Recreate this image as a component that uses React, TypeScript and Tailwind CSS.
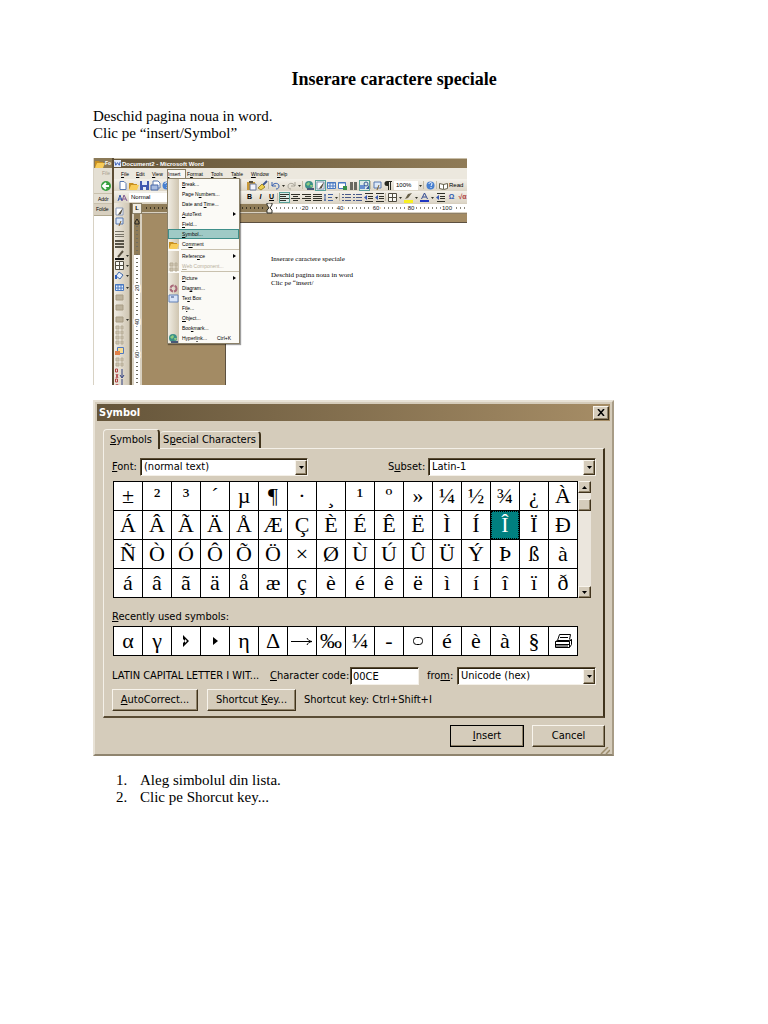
import { useState } from 'react';
import type { ReactNode } from 'react';

const SYMBOLS = [
  ...'±²³´µ¶·¸¹º»¼½¾¿À',
  ...'ÁÂÃÄÅÆÇÈÉÊËÌÍÎÏÐ',
  ...'ÑÒÓÔÕÖ×ØÙÚÛÜÝÞßà',
  ...'áâãäåæçèéêëìíîïð',
];

const Hollow = () => (
  <svg viewBox="0 0 8 12" className="w-2 h-3" aria-hidden="true">
    <path d="M1 0l6 6-6 6V8l2-2-2-2z" fill="#000" />
    <path d="M3 4l2 2-2 2z" fill="#fff" />
  </svg>
);

const Solid = () => (
  <svg viewBox="0 0 5 8" className="w-[5px] h-2" aria-hidden="true">
    <path d="M0 0l5 4-5 4z" fill="#000" />
  </svg>
);

const LongArrow = () => (
  <svg viewBox="0 0 22 9" className="w-[22px] h-[9px]" fill="none" stroke="#000" aria-hidden="true">
    <path d="M0 4.500h20M16 1c1 2 2 3 5 3.500-3 .5-4 1.500-5 3.500" />
  </svg>
);

const Oval = () => (
  <svg viewBox="0 0 12 10" className="w-3 h-[10px]" fill="none" stroke="#000" aria-hidden="true">
    <rect x="1.500" y="1.500" width="9" height="7" rx="3" />
  </svg>
);

const Printer = () => (
  <svg viewBox="0 0 19 16" className="w-[19px] h-4" fill="none" stroke="#000" aria-hidden="true">
    <path d="M3.500 7.500l2-6h11l-1 5M1.500 8.500l2-1h12l2-1v5l-2 3h-14zM1.500 8.500h14v6M1.500 11.500h14M2 13h12M15.500 8.500l2-2M6 4.500h8" />
  </svg>
);

const RECENT: { name: string; glyph: ReactNode }[] = [
  { name: 'alpha', glyph: 'α' },
  { name: 'gamma', glyph: 'γ' },
  { name: 'arrowhead', glyph: <Hollow /> },
  { name: 'small arrowhead', glyph: <Solid /> },
  { name: 'eta', glyph: 'η' },
  { name: 'delta', glyph: 'Δ' },
  { name: 'right arrow', glyph: <LongArrow /> },
  { name: 'per mille', glyph: '‰' },
  { name: 'one quarter', glyph: '¼' },
  { name: 'hyphen', glyph: '-' },
  { name: 'circle', glyph: <Oval /> },
  { name: 'e acute', glyph: 'é' },
  { name: 'e grave', glyph: 'è' },
  { name: 'a grave', glyph: 'à' },
  { name: 'section', glyph: '§' },
  { name: 'printer', glyph: <Printer /> },
];

// toolbar drawings, all on an 11x11 grid
const icons: Record<string, ReactNode> = {
  page: <path d="M3 1.500h4l2 2v6H3z" fill="#fff" stroke="#5878b0" />,
  open: (
    <>
      <path d="M1 3h4l1 1h3v5H1z" fill="#c89020" />
      <path d="M3 5h8L9 10H1z" fill="#f8cc58" />
    </>
  ),
  save: (
    <>
      <path d="M1 1h9v9H1z" fill="#4058b0" />
      <path d="M3 1h5v4H3zM4 7h3v3H4z" fill="#e4eaf8" />
    </>
  ),
  mail: (
    <>
      <path d="M3 1h5l2 2v5H3z" fill="#fff" stroke="#5878b0" />
      <path d="M1 5h7v5H1z" fill="#a8bce0" stroke="#4868a8" />
    </>
  ),
  paste: (
    <>
      <path d="M1 2h8v8H1z" fill="#c89838" />
      <path d="M4 4h6v6H4z" fill="#f4f4fc" stroke="#68789c" />
      <path d="M3 1h4v2H3z" fill="#585040" />
    </>
  ),
  brush: (
    <>
      <path d="M10 1L5 6" stroke="#405890" strokeWidth="2" />
      <path d="M5 4l3 3-4 3-3-2z" fill="#f0d050" stroke="#a08830" />
    </>
  ),
  undo: <path d="M2 2v4h4M2 6c2-4 7-3 7 0 0 2-1 3-3 3" fill="none" stroke="#3860b0" />,
  redo: <path d="M9 2v4H5M9 6C7 2 2 3 2 6c0 2 1 3 3 3" fill="none" stroke="#a8a498" />,
  globe: (
    <>
      <circle cx="5" cy="5" r="4" fill="#3c9088" />
      <path d="M2 4l3-2 1 2-2 2zM6 5h3L7 8z" fill="#90cc80" />
      <path d="M3 9h7" stroke="#485878" strokeWidth="2" />
    </>
  ),
  pencil: (
    <>
      <path d="M2 2h7v7H2z" fill="#fff" stroke="#8898b8" />
      <path d="M9 2L5 7l-1 2 3-1z" fill="#585040" />
    </>
  ),
  table: (
    <>
      <path d="M1.500 2.500h8v6h-8z" fill="#e8f0fc" stroke="#4878c0" />
      <path d="M1 3h9M4 3v6M7 3v6M1 6h9" stroke="#4878c0" />
    </>
  ),
  sheet: (
    <>
      <path d="M1.500 2.500h7v6h-7z" fill="#fff" stroke="#4878c0" />
      <path d="M1 3h8" stroke="#4878c0" />
      <path d="M6 6h4v4H6z" fill="#389048" />
    </>
  ),
  columns: <path d="M2 2h3v8H2zM6 2h3v8H6z" fill="#686860" />,
  draw: (
    <>
      <path d="M1 5h5v4H1z" fill="#6890d0" />
      <circle cx="7" cy="4" r="2" fill="none" stroke="#385898" />
      <path d="M7 9l3-4v4z" fill="#3858a0" />
    </>
  ),
  map: (
    <>
      <path d="M2 2h7v6H2z" fill="#dce8f8" stroke="#5878b0" />
      <path d="M7 5l-2 5" stroke="#806030" />
    </>
  ),
  pilcrow: <path d="M9 1H4a2 2 0 000 5h1v4h1V2h1v8h1V2h1z" fill="#282820" />,
  help: (
    <>
      <circle cx="5.500" cy="5.500" r="4" fill="#4880d0" />
      <path d="M4 4c0-2 3-2 3 0 0 1-1 1-1 2M6 7v1" fill="none" stroke="#fff" />
    </>
  ),
  book: <path d="M1.500 3.500l4 1 4-1v5l-4 1-4-1zM5.500 4v5" fill="#fff" stroke="#686450" />,
  left: <path d="M1 2.500h9M1 4.500h6M1 6.500h9M1 8.500h6" stroke="#303028" />,
  center: <path d="M1 2.500h9M3 4.500h5M1 6.500h9M3 8.500h5" stroke="#303028" />,
  right: <path d="M1 2.500h9M4 4.500h6M1 6.500h9M4 8.500h6" stroke="#303028" />,
  justify: <path d="M1 2.500h9M1 4.500h9M1 6.500h9M1 8.500h9" stroke="#303028" />,
  spacing: <path d="M2 2v7M5 2.500h5M5 5.500h4M5 8.500h5M1 3h2M1 8h2" stroke="#4060a0" />,
  list: <path d="M1 2.500h2M1 5.500h2M1 8.500h2M4 2.500h6M4 5.500h6M4 8.500h6" stroke="#485888" />,
  indent: (
    <>
      <path d="M2 1.500h8M5 4.500h5M5 6.500h5M2 9.500h8" stroke="#303028" />
      <path d="M4 3v5L1 5.500z" fill="#3858b0" />
    </>
  ),
  border: <path d="M1.500 1.500h8v8h-8zM5.500 1.500v8M1.500 5.500h8" fill="#f8f8f4" stroke="#504c40" />,
  highlight: (
    <>
      <path d="M1 8h9v3H1z" fill="#f8f020" />
      <path d="M9 1L5 6l-3 1 3-5z" fill="#686048" />
    </>
  ),
  color: (
    <>
      <path d="M2.500 7L5.500 1l3 6M4 5h3" fill="none" stroke="#304890" />
      <path d="M1 8h9v2H1z" fill="#2038c0" />
    </>
  ),
  lines: <path d="M1 3.500h9M1 6.500h9M1 8.500h9" stroke="#787468" />,
  thick: <path d="M1 3h9M1 6h9M1 9h9" stroke="#585448" strokeWidth="2" />,
  pen: (
    <>
      <path d="M1 8h9v2H1z" fill="#101010" />
      <path d="M9 1L4 7" stroke="#585040" strokeWidth="2" />
    </>
  ),
  bucket: (
    <>
      <path d="M5 2l4 3-3 4-4-3z" fill="#e8f0fc" stroke="#4068a8" />
      <path d="M2 5v4" stroke="#3060c0" strokeWidth="2" />
    </>
  ),
  cells: <path d="M2 3h7v5H2z" fill="#bcb29c" stroke="#a89c84" />,
  dim: <path d="M2 2h3v3H2zM7 2h2v3H7zM2 7h3v3H2zM7 7h2v3H7z" fill="#cbc2ae" stroke="#b8ae98" />,
  frame: (
    <>
      <path d="M3.500 1.500h6v6h-6z" fill="#f8dc90" stroke="#5078c0" />
      <path d="M1 5h5v4H1z" fill="#e08048" />
    </>
  ),
  sortUp: (
    <>
      <path d="M1.500 1v3h2V1zM2 6l2 4M4 6L2 10" fill="none" stroke="#b04040" />
      <path d="M8 1v8M6 7l2 3 2-3" fill="none" stroke="#304080" />
    </>
  ),
  ring: <circle cx="5.500" cy="5.500" r="3" fill="none" stroke="#a86878" strokeWidth="2" strokeDasharray="4 1" />,
  picture: (
    <>
      <path d="M1 2h9v7H1z" fill="#d8e4f8" stroke="#6080b8" />
      <path d="M3 4h3" stroke="#304880" />
    </>
  ),
};

const Icon = ({ name, boxed = false }: { name: string; boxed?: boolean }) => (
  <svg
    viewBox="0 0 11 11"
    aria-hidden="true"
    className={
      boxed
        ? 'w-[11px] h-[11px] shrink-0 bg-[#dcebe6] outline outline-1 -outline-offset-1 outline-[#58a098]'
        : 'w-[11px] h-[11px] shrink-0'
    }
  >
    {icons[name]}
  </svg>
);

const Caret = () => (
  <svg viewBox="0 0 5 11" aria-hidden="true" className="w-[5px] h-[11px] shrink-0">
    <path d="M1 5h3L2.500 7z" fill="#303028" />
  </svg>
);

const Gap = () => <span className="w-[2px] h-2 shrink-0 border-l border-[#c4bca8]" />;

// "-" is a separator, "v" a drop-down caret, "[x]" a pressed button
const Tools = ({ items }: { items: string[] }) => (
  <>
    {items.map((item, i) => {
      if (item === '-') return <Gap key={i} />;
      if (item === 'v') return <Caret key={i} />;
      if (item.startsWith('[')) return <Icon key={i} name={item.slice(1, -1)} boxed />;
      return <Icon key={i} name={item} />;
    })}
  </>
);

const MENU_BAR = [
  { key: 'F', rest: 'ile', width: 'w-[15px]' },
  { key: 'E', rest: 'dit', width: 'w-[16px]' },
  { key: 'V', rest: 'iew', width: 'w-[16px]' },
  { key: 'I', rest: 'nsert', width: 'w-[19px] bg-[#f8f6f2] outline outline-1 -outline-offset-1 outline-[#8a8068]' },
  { pre: 'F', key: 'o', rest: 'rmat', width: 'w-[24px] pl-[3px]' },
  { key: 'T', rest: 'ools', width: 'w-[20px]' },
  { pre: 'T', key: 'a', rest: 'ble', width: 'w-[20px]' },
  { key: 'W', rest: 'indow', width: 'w-[26px]' },
  { key: 'H', rest: 'elp', width: 'w-[16px]' },
];

type MenuItem = {
  text: [string, string, string];
  icon?: string;
  sub?: boolean;
  hint?: string;
  active?: boolean;
  disabled?: boolean;
  line?: boolean;
};

const INSERT_MENU: MenuItem[] = [
  { text: ['', 'B', 'reak...'] },
  { text: ['Page N', 'u', 'mbers...'] },
  { text: ['Date and ', 'T', 'ime...'] },
  { text: ['', 'A', 'utoText'], sub: true },
  { text: ['', 'F', 'ield...'] },
  { text: ['', 'S', 'ymbol...'], active: true },
  { text: ['Co', 'm', 'ment'], icon: 'open' },
  { text: ['Refere', 'n', 'ce'], sub: true, line: true },
  { text: ['', 'W', 'eb Component...'], icon: 'dim', disabled: true },
  { text: ['', 'P', 'icture'], sub: true, line: true },
  { text: ['Dia', 'g', 'ram...'], icon: 'ring' },
  { text: ['Te', 'x', 't Box'], icon: 'picture' },
  { text: ['Fi', 'l', 'e...'] },
  { text: ['', 'O', 'bject...'] },
  { text: ['Boo', 'k', 'mark...'] },
  { text: ['Hyperl', 'i', 'nk...'], icon: 'globe', hint: 'Ctrl+K' },
];

const SIDE_TOOLS: { name: string; caret?: boolean; gap?: boolean }[] = [
  { name: 'pencil' },
  { name: 'map', gap: true },
  { name: 'lines' },
  { name: 'thick', gap: true },
  { name: 'pen', caret: true },
  { name: 'border', caret: true },
  { name: 'bucket', caret: true, gap: true },
  { name: 'table', caret: true },
  { name: 'cells' },
  { name: 'cells', gap: true },
  { name: 'cells', caret: true },
  { name: 'dim' },
  { name: 'dim', gap: true },
  { name: 'frame' },
  { name: 'dim', gap: true },
  { name: 'sortUp' },
  { name: 'sortUp' },
];

const InsertMenu = () => (
  <div
    role="menu"
    className="absolute left-[53px] top-[20px] w-[73px] border border-[#8a8068] bg-[#fbfaf6] shadow-[1px_1px_1px_#00000060]"
  >
    {INSERT_MENU.map((item) => (
      <div key={item.text.join('')} className={item.line ? 'pt-[2px] bg-[linear-gradient(#c9c1ae,#c9c1ae)] bg-size-[58px_1px] bg-right-top bg-no-repeat' : ''}>
        <button
          type="button"
          role="menuitem"
          disabled={item.disabled}
          className={
            item.active
              ? 'flex w-full h-[10px] items-center bg-[#9fcac6] outline outline-1 -outline-offset-1 outline-[#3f8f8a] text-black'
              : item.disabled
                ? 'flex w-full h-[10px] items-center text-[#b8b09c]'
                : 'flex w-full h-[10px] items-center text-black'
          }
        >
          <span
            className={
              item.active
                ? 'flex w-[11px] h-full items-center shrink-0'
                : 'flex w-[11px] h-full items-center shrink-0 bg-linear-to-r from-[#f0ece2] to-[#cfc5b0]'
            }
          >
            {item.icon && <Icon name={item.icon} />}
          </span>
          <span className="pl-[3px] whitespace-nowrap">
            {item.text[0]}
            <u>{item.text[1]}</u>
            {item.text[2]}
          </span>
          {item.sub && (
            <svg viewBox="0 0 3 4" className="ml-auto mr-[3px] w-[3px] h-1" aria-hidden="true">
              <path d="M0 0l3 2-3 2z" />
            </svg>
          )}
          {item.hint && <span className="ml-auto pr-2">{item.hint}</span>}
        </button>
      </div>
    ))}
  </div>
);

const HorizontalRuler = () => (
  <svg viewBox="0 0 326 11" className="w-[326px] h-[11px] shrink-0" aria-hidden="true">
    <path d="M0 1h128v8H0z" fill="#8f7c58" />
    <path d="M127 1h199v8H127z" fill="#fff" />
    <path d="M0 10.500h326" stroke="#8f8068" />
    <path d="M4 5h120" stroke="#3c3424" strokeWidth="2" strokeDasharray="1 3" />
    <path d="M134 5h192" stroke="#8c887c" strokeWidth="2" strokeDasharray="1 3" />
    <path d="M125 0h5v2l-2 3 2 2v3h-5V7l2-2-2-3z" fill="#f4f0e8" stroke="#303028" />
    <g fontSize="6" textAnchor="middle" fill="#202020" className="[paint-order:stroke] stroke-white stroke-3">
      <text x="163" y="7">20</text>
      <text x="198" y="7">40</text>
      <text x="234" y="7">60</text>
      <text x="269" y="7">80</text>
      <text x="305" y="7">100</text>
    </g>
  </svg>
);

const VerticalRuler = () => (
  <svg viewBox="0 0 10 171" className="w-[10px] h-[171px] shrink-0" aria-hidden="true">
    <path d="M0 0h10v171H0z" fill="#d8d0c0" />
    <path d="M2 0h6v41H2z" fill="#8f7c58" />
    <path d="M2 41h6v130H2z" fill="#fff" />
    <path d="M5 12v159" stroke="#706c60" strokeWidth="2" strokeDasharray="1 3" />
    <path d="M3 10V8l2-3 2 3v2z" fill="none" stroke="#202020" />
    <g fontSize="6" textAnchor="middle" fill="#202020" className="[paint-order:stroke] stroke-white stroke-3">
      <text transform="translate(7 74) rotate(-90)">20</text>
      <text transform="translate(7 108) rotate(-90)">40</text>
      <text transform="translate(7 141) rotate(-90)">60</text>
    </g>
  </svg>
);

const ExplorerEdge = () => (
  <div className="w-[18px] shrink-0 whitespace-nowrap text-[5px] leading-[10px]">
    <div className="flex h-[10px] items-center bg-[#8b7a58] font-bold text-white">
      <Icon name="open" />
      Fo
    </div>
    <div className="h-[11px] bg-[#e4dfd3] pl-2 text-[#a8a090]">File</div>
    <div className="flex h-[14px] items-center justify-end bg-[#e4dfd3]">
      <svg viewBox="0 0 12 12" className="w-3 h-3" aria-hidden="true">
        <circle cx="6" cy="6" r="5" fill="#38a040" />
        <path d="M9 6H3M6 3L3 6l3 3" fill="none" stroke="#fff" strokeWidth="2" />
      </svg>
    </div>
    <div className="h-[11px] border-y border-[#c8c0ac] bg-[#e4dfd3] pl-1">Addr</div>
    <div className="h-[12px] border-b border-[#b0a890] bg-[#d8d0c0] pl-[2px]">Folde</div>
  </div>
);

const WordWindow = () => (
  <figure className="flex w-full max-w-[374px] h-[227px] overflow-hidden border-l border-[#d8d2c4] bg-white font-['Liberation_Sans',sans-serif]">
    <ExplorerEdge />
    <div className="relative flex min-w-0 flex-1 flex-col border-l-2 border-[#5c4d34] text-[5px] leading-[10px]">
      <div className="flex h-[10px] items-center border-t border-[#c8bea8] bg-linear-to-r from-[#66563a] to-[#8f7b57] font-bold text-white">
        <svg viewBox="0 0 8 8" className="w-[7px] h-[7px] mr-px" aria-hidden="true">
          <path d="M0 0h8v8H0z" fill="#e4ecfc" />
          <path d="M1 2l1 4 2-3 2 3 1-4" fill="none" stroke="#2850b0" />
        </svg>
        <span className="text-[6px]">Document2 - Microsoft Word</span>
      </div>
      <nav aria-label="Word menu" className="flex h-[11px] shrink-0 items-center bg-[#ece8de] pl-[6px]">
        {MENU_BAR.map((item) => (
          <button type="button" key={item.key + item.rest} className={`${item.width} h-[10px] shrink-0 pl-px text-left`}>
            {item.pre}
            <u>{item.key}</u>
            {item.rest}
          </button>
        ))}
      </nav>
      <div className="flex h-3 shrink-0 items-center bg-linear-to-b from-[#f4f1ea] to-[#dcd5c6] pl-[3px]">
        <div className="flex w-[129px] shrink-0 items-center overflow-hidden">
          <Tools items={['page', 'open', 'save', 'mail', 'help', 'map', 'page', 'book']} />
        </div>
        <Tools
          items={['paste', 'brush', '-', 'undo', 'v', 'redo', 'v', '-', 'globe', '[pencil]', 'table', 'sheet', 'columns', '[draw]', '-', 'map', 'pilcrow']}
        />
        <input aria-label="Zoom" defaultValue="100%" className="w-[24px] h-[9px] shrink-0 bg-white pl-[2px] text-[6px]" />
        <Tools items={['v', '-', 'help', '-', 'book']} />
        <span className="text-[6px]">Read</span>
      </div>
      <div className="flex h-3 shrink-0 items-center bg-linear-to-b from-[#f4f1ea] to-[#dcd5c6] pl-[3px]">
        <div className="flex w-[127px] shrink-0 items-center gap-px">
          <svg viewBox="0 0 11 11" className="w-[11px] h-[11px]" aria-hidden="true">
            <path d="M1 9l2-6 2 6M2 7h3" fill="none" stroke="#3858a8" />
            <path d="M5 9l2-6 3 6M6 7h3" fill="none" stroke="#805890" />
          </svg>
          <input aria-label="Style" defaultValue="Normal" className="w-[60px] h-[9px] bg-white pl-[2px] text-[6px]" />
        </div>
        <b className="w-[11px] shrink-0 text-center text-[7px]">B</b>
        <i className="w-[11px] shrink-0 text-center text-[7px] font-bold">I</i>
        <u className="w-[11px] shrink-0 text-center text-[7px] font-bold">U</u>
        <Tools
          items={['-', '[left]', 'center', 'right', 'justify', 'spacing', 'v', '-', 'list', 'list', 'indent', 'indent', '-', 'border', 'v', 'highlight', 'v', 'color', 'v', 'indent']}
        />
        <b className="w-[11px] shrink-0 text-center text-[7px] text-[#3058b0]">Ω</b>
        <b className="w-[11px] shrink-0 text-center text-[7px] text-[#b04040]">√α</b>
      </div>
      <div className="flex min-h-0 flex-1">
        <div className="flex w-4 shrink-0 flex-col border-r border-[#a49a84] bg-linear-to-r from-[#f0ece3] to-[#d0c7b4] pt-[3px]">
          {SIDE_TOOLS.map((tool, i) => (
            <div key={i} className={tool.gap ? 'mb-[2px] flex h-[10px] shrink-0 items-center' : 'flex h-[10px] shrink-0 items-center'}>
              <Icon name={tool.name} />
              {tool.caret && <Caret />}
            </div>
          ))}
        </div>
        <div className="flex min-w-0 flex-1 flex-col overflow-hidden border-l-2 border-[#6a5b40]">
          <div className="flex h-[11px] shrink-0 bg-[#d8d0c0]">
            <span className="w-[10px] shrink-0 border border-[#8a8068] bg-[#f0ece2] text-center text-[6px] leading-[9px] font-bold">L</span>
            <HorizontalRuler />
          </div>
          <div className="flex min-h-0 flex-1">
            <VerticalRuler />
            <div className="flex-1 bg-[#a38b64] pt-2 pl-[83px]">
              <div className="h-full border-t border-l border-[#5c5040] bg-white pl-[45px] pt-[32px] font-['Liberation_Serif',serif] text-[7px] leading-2 text-black">
                <p className="pb-2">Inserare caractere speciale</p>
                <p>Deschid pagina noua in word</p>
                <p>Clic pe “insert/</p>
              </div>
            </div>
          </div>
        </div>
      </div>
      <InsertMenu />
    </div>
  </figure>
);

const RAISED = 'border border-t-[#f8f4ec] border-l-[#f8f4ec] border-r-[#40331c] border-b-[#40331c] shadow-[inset_-1px_-1px_0_#8f8268]';
const SUNKEN = 'border border-t-[#5a4c34] border-l-[#5a4c34] border-r-[#f4f0e8] border-b-[#f4f0e8] shadow-[inset_1px_1px_0_#2c2210]';

const Arrow = ({ up = false }: { up?: boolean }) => (
  <svg viewBox="0 0 5 3" className="w-[5px] h-[3px]" aria-hidden="true">
    <path d={up ? 'M0 3h5L2.500 0z' : 'M0 0h5L2.500 3z'} />
  </svg>
);

const SelectBox = ({ id, options, className }: { id: string; options: string[]; className: string }) => (
  <div className={`relative h-[18px] ${className}`}>
    <select id={id} className={`h-full w-full appearance-none bg-white pl-[3px] leading-4 ${SUNKEN}`}>
      {options.map((option) => (
        <option key={option}>{option}</option>
      ))}
    </select>
    <span className={`pointer-events-none absolute top-[2px] right-px bottom-px flex w-3 items-center justify-center bg-[#d5ccbb] ${RAISED}`}>
      <Arrow />
    </span>
  </div>
);

const SymbolDialog = () => {
  const [selected, setSelected] = useState('Î');

  return (
    <section
      aria-label="Symbol"
      className="w-full max-w-[521px] border-2 border-t-[#e8e2d6] border-l-[#e8e2d6] border-r-[#a89c86] border-b-[#8f846e] bg-[#d5ccbb] px-[2px] pt-[2px] font-['DejaVu_Sans_Condensed','DejaVu_Sans',sans-serif] text-[11px] leading-4 text-black"
    >
      <header className="flex h-[17px] items-center justify-between bg-linear-to-r from-[#65553a] to-[#a68d66] pl-[2px] pr-px">
        <h2 className="font-bold text-white">Symbol</h2>
        <button type="button" aria-label="Close" className={`flex h-[14px] w-4 items-center justify-center bg-[#d5ccbb] ${RAISED}`}>
          <svg viewBox="0 0 8 7" className="w-2 h-[7px]" stroke="#000" strokeWidth="1.500" aria-hidden="true">
            <path d="M1 0l6 7M7 0L1 7" />
          </svg>
        </button>
      </header>

      <div className="pt-2 pr-[5px] pl-[6px]">
        <div role="tablist" className="flex items-end">
          <button
            type="button"
            role="tab"
            aria-selected="true"
            className="relative -mb-px h-5 w-[57px] rounded-t-sm border-t border-l border-r-2 border-t-[#f4f0e8] border-l-[#f4f0e8] border-r-[#40331c] bg-[#d5ccbb]"
          >
            <u>S</u>ymbols
          </button>
          <button
            type="button"
            role="tab"
            aria-selected="false"
            className="h-[17px] w-[101px] rounded-t-sm border-t border-r-2 border-t-[#f4f0e8] border-r-[#40331c]"
          >
            S<u>p</u>ecial Characters
          </button>
        </div>

        <div role="tabpanel" className="border-t border-l border-r-2 border-b-2 border-t-[#f4f0e8] border-l-[#f4f0e8] border-r-[#40331c] border-b-[#5a4c34] pt-[9px] pr-[7px] pb-[5px] pl-2">
          <div className="flex items-center">
            <label htmlFor="font" className="w-7">
              <u>F</u>ont:
            </label>
            <SelectBox id="font" options={['(normal text)']} className="w-[168px]" />
            <label htmlFor="subset" className="ml-auto w-10">
              S<u>u</u>bset:
            </label>
            <SelectBox id="subset" options={['Latin-1']} className="w-[168px]" />
          </div>

          <div className="mt-[5px] flex pl-px">
            <div className="grid grid-cols-16 gap-px border border-black bg-black font-['Liberation_Serif',serif] text-[22px] leading-7">
              {SYMBOLS.map((symbol) => (
                <button
                  type="button"
                  key={symbol}
                  onClick={() => setSelected(symbol)}
                  className={
                    symbol === selected
                      ? 'h-7 w-7 bg-[#008080] text-white outline-1 -outline-offset-1 outline-dotted outline-black'
                      : 'h-7 w-7 bg-white'
                  }
                >
                  {symbol}
                </button>
              ))}
            </div>
            <div className="flex w-[13px] flex-col bg-[#ebe6dd]">
              <button type="button" aria-label="Scroll up" className={`flex h-3 items-center justify-center bg-[#d5ccbb] ${RAISED}`}>
                <Arrow up />
              </button>
              <span className={`mt-[6px] h-3 bg-[#d5ccbb] ${RAISED}`} />
              <button type="button" aria-label="Scroll down" className={`mt-auto flex h-3 items-center justify-center bg-[#d5ccbb] ${RAISED}`}>
                <Arrow />
              </button>
            </div>
          </div>

          <p className="mt-[11px]">
            <u>R</u>ecently used symbols:
          </p>
          <div className="mt-px flex pl-px">
            <div className="grid grid-cols-16 gap-px border border-black bg-black font-['Liberation_Serif',serif] text-[22px] leading-7">
              {RECENT.map((item) => (
                <button type="button" key={item.name} aria-label={item.name} className="flex h-7 w-7 items-center justify-center bg-white">
                  {item.glyph}
                </button>
              ))}
            </div>
          </div>

          <div className="mt-[11px] flex items-center">
            <span className="w-[158px] whitespace-nowrap">LATIN CAPITAL LETTER I WIT...</span>
            <label htmlFor="code" className="w-20 whitespace-nowrap">
              <u>C</u>haracter code:
            </label>
            <input id="code" defaultValue="00CE" className={`h-[18px] w-[69px] bg-white pl-[2px] ${SUNKEN}`} />
            <label htmlFor="from" className="ml-auto w-[30px]">
              fro<u>m</u>:
            </label>
            <SelectBox id="from" options={['Unicode (hex)']} className="w-[139px]" />
          </div>

          <div className="mt-1 flex items-center">
            <button type="button" className={`h-[22px] w-[86px] ${RAISED}`}>
              <u>A</u>utoCorrect...
            </button>
            <button type="button" className={`ml-[9px] h-[22px] w-[89px] ${RAISED}`}>
              Shortcut <u>K</u>ey...
            </button>
            <span className="ml-2">Shortcut key: Ctrl+Shift+I</span>
          </div>
        </div>

        <div className="mt-[7px] flex justify-end gap-2">
          <button type="button" className={`h-[22px] w-[74px] outline outline-1 -outline-offset-1 outline-black ${RAISED}`}>
            <u>I</u>nsert
          </button>
          <button type="button" className={`h-[22px] w-[73px] ${RAISED}`}>
            Cancel
          </button>
        </div>
      </div>
      <svg viewBox="0 0 10 7" className="ml-auto h-[7px] w-[10px]" stroke="#9c8c6c" strokeWidth="1.500" aria-hidden="true">
        <path d="M1 7l7-7M6 7l4-4" />
      </svg>
    </section>
  );
};

export default function App() {
  return (
    <main className="min-h-screen bg-white pt-[69px] pr-[73px] pb-16 pl-[93px] font-['Liberation_Serif',serif] text-[15px] leading-[17px] text-black">
      <h1 className="text-center text-lg leading-5 font-bold">Inserare caractere speciale</h1>
      <p className="mt-[19px]">Deschid pagina noua in word.</p>
      <p>Clic pe “insert/Symbol”</p>
      <div className="mt-4">
        <WordWindow />
      </div>
      <div className="mt-[15px]">
        <SymbolDialog />
      </div>
      <ol className="mt-4 list-decimal pl-[38px]">
        <li className="pl-[9px]">Aleg simbolul din lista.</li>
        <li className="pl-[9px]">Clic pe Shorcut key...</li>
      </ol>
    </main>
  );
}
